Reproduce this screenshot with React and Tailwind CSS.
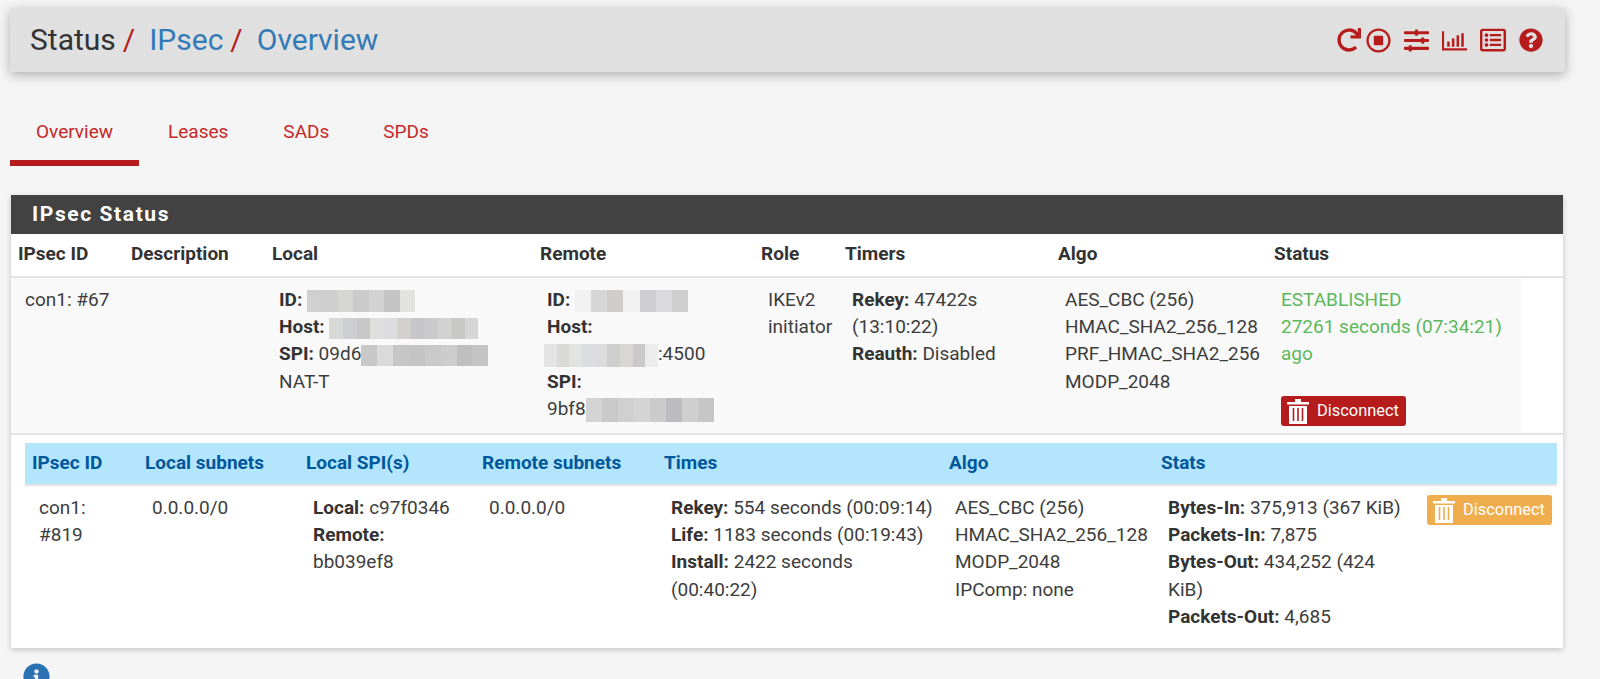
import React from "react";
import { FaRedo, FaRegStopCircle, FaSlidersH, FaRegListAlt, FaQuestionCircle, FaInfoCircle } from "react-icons/fa";

function ChartIcon() {
  return (
    <svg viewBox="0 0 24 24" className="w-[25px] h-[25px]" fill="#b71c1c">
      <path d="M0 3h2v16.4H24v2.2H0z" />
      <rect x="5" y="13" width="2.4" height="5" />
      <rect x="9.5" y="10" width="2.4" height="8" />
      <rect x="14" y="7" width="2.4" height="11" />
      <rect x="18.5" y="5" width="2.4" height="13" />
    </svg>
  );
}

function TrashIcon({ color }) {
  return (
    <svg viewBox="0 0 22 26" className="w-[22px] h-[26px] shrink-0">
      <path d="M0 4h8V1h6v3h8v2.5H0z" fill="#fff" />
      <path d="M2 8h18v18H2z" fill="#fff" />
      <path d="M6.5 10v13M11 10v13M15.5 10v13" stroke={color} strokeWidth="1.6" />
    </svg>
  );
}

const g1 = ["#d0d0d0","#cfcfcf","#d6d6d4","#cbcbcb","#d2d2d2","#c4c4c4","#e2e2e0"];
const g2 = ["#d8d8d6","#cdced2","#c8c8c8","#dededc","#dddde0","#d4d0cc","#c6c6c8","#cacaca","#d2d2d2","#c8c8c6","#d6d6d6"];
const g3 = ["#c8c8c8","#dadada","#c6c6c6","#c4c4c4","#c9c9c9","#cdcdcd","#bfbfbf","#c4c4c4"];
const g4 = ["#f1f1f1","#d7d6d6","#cfcdc9","#f2f2f2","#cfcfd2","#dadadc","#cfcfcf"];
const g5 = ["#e4e4e4","#d9d9d7","#e2e2e0","#dbdde0","#dcdcdc","#cfcfd0","#d8d7d4","#c9c9cc","#ececec"];
const g6 = ["#d4d4d4","#c9c9c9","#d0d0d0","#d4d4d4","#cbcbcb","#bcbcc0","#cfcfd0","#c6c6c6"];

function Blur({ colors, w, h }) {
  return (
    <span className="inline-flex align-middle overflow-hidden" style={{ width: w, height: h }}>
      {colors.map((c, i) => (
        <span key={i} className="flex-1 h-full" style={{ backgroundColor: c }} />
      ))}
    </span>
  );
}

function DisconnectButton({ bg, width, color }) {
  return (
    <div className={`flex items-center gap-[8px] h-[30px] rounded-[3px] pl-[6px] text-white text-[16.4px] ${bg} ${width}`}>
      <TrashIcon color={color} />
      <span>Disconnect</span>
    </div>
  );
}

const B = ({ children }) => <b className="font-bold text-[#333]">{children}</b>;

export default function App() {
  return (
    <div className="bg-[#f5f5f5] text-[#3d3d3d] text-[19px] leading-[27.2px] overflow-hidden pt-[8px] pl-[10px] pr-[35px] h-[679px]" style={{ fontFamily: "Roboto, sans-serif" }}>
      <div className="h-[64px] bg-[#e0e0e0] rounded-[3px] shadow-[0_3px_12px_rgba(0,0,0,0.3)] flex items-center justify-between pl-[20px] pr-[22px]">
        <div className="text-[30px] leading-[1] flex items-center">
          <span className="text-[#333]">Status</span>
          <span className="text-[#b71c1c] ml-[7px]">/</span>
          <span className="text-[#337ab7] ml-[14px]">IPsec</span>
          <span className="text-[#b71c1c] ml-[7px]">/</span>
          <span className="text-[#337ab7] ml-[14px]">Overview</span>
        </div>
        <div className="flex items-center text-[#b71c1c]">
          <FaRedo className="w-[24px] h-[24px]" />
          <FaRegStopCircle className="w-[25px] h-[25px] ml-[5px]" />
          <FaSlidersH className="w-[25px] h-[25px] ml-[13px]" />
          <span className="ml-[13px] flex"><ChartIcon /></span>
          <FaRegListAlt className="w-[26px] h-[26px] ml-[13px]" />
          <FaQuestionCircle className="w-[24px] h-[24px] ml-[13px]" />
        </div>
      </div>

      <nav className="flex mt-[28px] h-[66px] text-[#c62828]">
        <div className="w-[129px] flex justify-center items-start pt-[18px] border-b-[6px] border-[#b71c1c]">Overview</div>
        <div className="pl-[29px] pt-[18px]">Leases</div>
        <div className="pl-[55px] pt-[18px]">SADs</div>
        <div className="pl-[54px] pt-[18px]">SPDs</div>
      </nav>

      <section className="mt-[29px] ml-[1px] w-[1552px] h-[453px] bg-white shadow-[0_2px_6px_rgba(0,0,0,0.2)]">
        <h2 className="h-[39px] bg-[#424242] text-white font-bold text-[21px] tracking-[1.6px] flex items-center pl-[21px]">IPsec Status</h2>

        <div className="flex h-[44px] items-center font-bold text-[#333] border-b-[2px] border-[#e4e4e4] pb-[2px]">
          <div className="w-[113px] pl-[7px]">IPsec ID</div>
          <div className="w-[141px] pl-[7px]">Description</div>
          <div className="w-[268px] pl-[7px]">Local</div>
          <div className="w-[221px] pl-[7px]">Remote</div>
          <div className="w-[84px] pl-[7px]">Role</div>
          <div className="w-[213px] pl-[7px]">Timers</div>
          <div className="w-[216px] pl-[7px]">Algo</div>
          <div className="pl-[7px]">Status</div>
        </div>

        <div className="flex h-[157px] border-b-[2px] border-[#e4e4e4]">
          <div className="flex w-[1510px] h-full bg-[#f9f9f9] pt-[8px]">
            <div className="w-[113px] pl-[14px]">con1: #67</div>
            <div className="w-[141px]" />
            <div className="w-[268px] pl-[14px]">
              <div><B>ID:</B> <Blur colors={g1} w={108} h={22} /></div>
              <div><B>Host:</B> <Blur colors={g2} w={149} h={21} /></div>
              <div><B>SPI:</B> 09d6<Blur colors={g3} w={127} h={21} /></div>
              <div>NAT-T</div>
            </div>
            <div className="w-[221px] pl-[14px]">
              <div><B>ID:</B> <Blur colors={g4} w={113} h={22} /></div>
              <div><B>Host:</B></div>
              <div className="-ml-[3px]"><Blur colors={g5} w={114} h={23} />:4500</div>
              <div><B>SPI:</B></div>
              <div>9bf8<Blur colors={g6} w={128} h={24} /></div>
            </div>
            <div className="w-[84px] pl-[14px]">IKEv2<br />initiator</div>
            <div className="w-[213px] pl-[14px]">
              <div><B>Rekey:</B> 47422s</div>
              <div>(13:10:22)</div>
              <div><B>Reauth:</B> Disabled</div>
            </div>
            <div className="w-[216px] pl-[14px]">
              <div>AES_CBC (256)</div>
              <div>HMAC_SHA2_256_128</div>
              <div>PRF_HMAC_SHA2_256</div>
              <div>MODP_2048</div>
            </div>
            <div className="flex-1 pl-[14px] text-[#5cb85c]">
              <div>ESTABLISHED</div>
              <div>27261 seconds (07:34:21)</div>
              <div>ago</div>
              <div className="mt-[28px]">
                <DisconnectButton bg="bg-[#b71c1c]" color="#b71c1c" width="w-[125px]" />
              </div>
            </div>
          </div>
        </div>

        <div className="ml-[14px] mr-[6px] mt-[8px]">
          <div className="flex h-[43px] items-center font-bold text-[#01579b] bg-[#b3e5fc] border-b-[2px] border-[#e4e4e4] pb-[2px]">
            <div className="w-[113px] pl-[7px]">IPsec ID</div>
            <div className="w-[161px] pl-[7px]">Local subnets</div>
            <div className="w-[176px] pl-[7px]">Local SPI(s)</div>
            <div className="w-[182px] pl-[7px]">Remote subnets</div>
            <div className="w-[285px] pl-[7px]">Times</div>
            <div className="w-[212px] pl-[7px]">Algo</div>
            <div className="pl-[7px]">Stats</div>
          </div>
          <div className="flex pt-[8px]">
            <div className="w-[113px] pl-[14px] pr-[14px]">con1: #819</div>
            <div className="w-[161px] pl-[14px]">0.0.0.0/0</div>
            <div className="w-[176px] pl-[14px] pr-[14px]">
              <div><B>Local:</B> c97f0346</div>
              <div><B>Remote:</B></div>
              <div>bb039ef8</div>
            </div>
            <div className="w-[182px] pl-[14px]">0.0.0.0/0</div>
            <div className="w-[285px] pl-[14px] pr-[8px]">
              <div><B>Rekey:</B> 554 seconds (00:09:14)</div>
              <div><B>Life:</B> 1183 seconds (00:19:43)</div>
              <div><B>Install:</B> 2422 seconds</div>
              <div>(00:40:22)</div>
            </div>
            <div className="w-[212px] pl-[13px]">
              <div>AES_CBC (256)</div>
              <div>HMAC_SHA2_256_128</div>
              <div>MODP_2048</div>
              <div>IPComp: none</div>
            </div>
            <div className="w-[273px] pl-[14px] pr-[14px]">
              <div><B>Bytes-In:</B> 375,913 (367 KiB)</div>
              <div><B>Packets-In:</B> 7,875</div>
              <div><B>Bytes-Out:</B> 434,252 (424</div>
              <div>KiB)</div>
              <div><B>Packets-Out:</B> 4,685</div>
            </div>
            <div className="pt-[1px]">
              <DisconnectButton bg="bg-[#f0ad4e]" color="#f0ad4e" width="w-[125px]" />
            </div>
          </div>
        </div>
      </section>

      <FaInfoCircle className="w-[27px] h-[27px] mt-[15px] ml-[13px] text-[#2b72b5]" />
    </div>
  );
}
